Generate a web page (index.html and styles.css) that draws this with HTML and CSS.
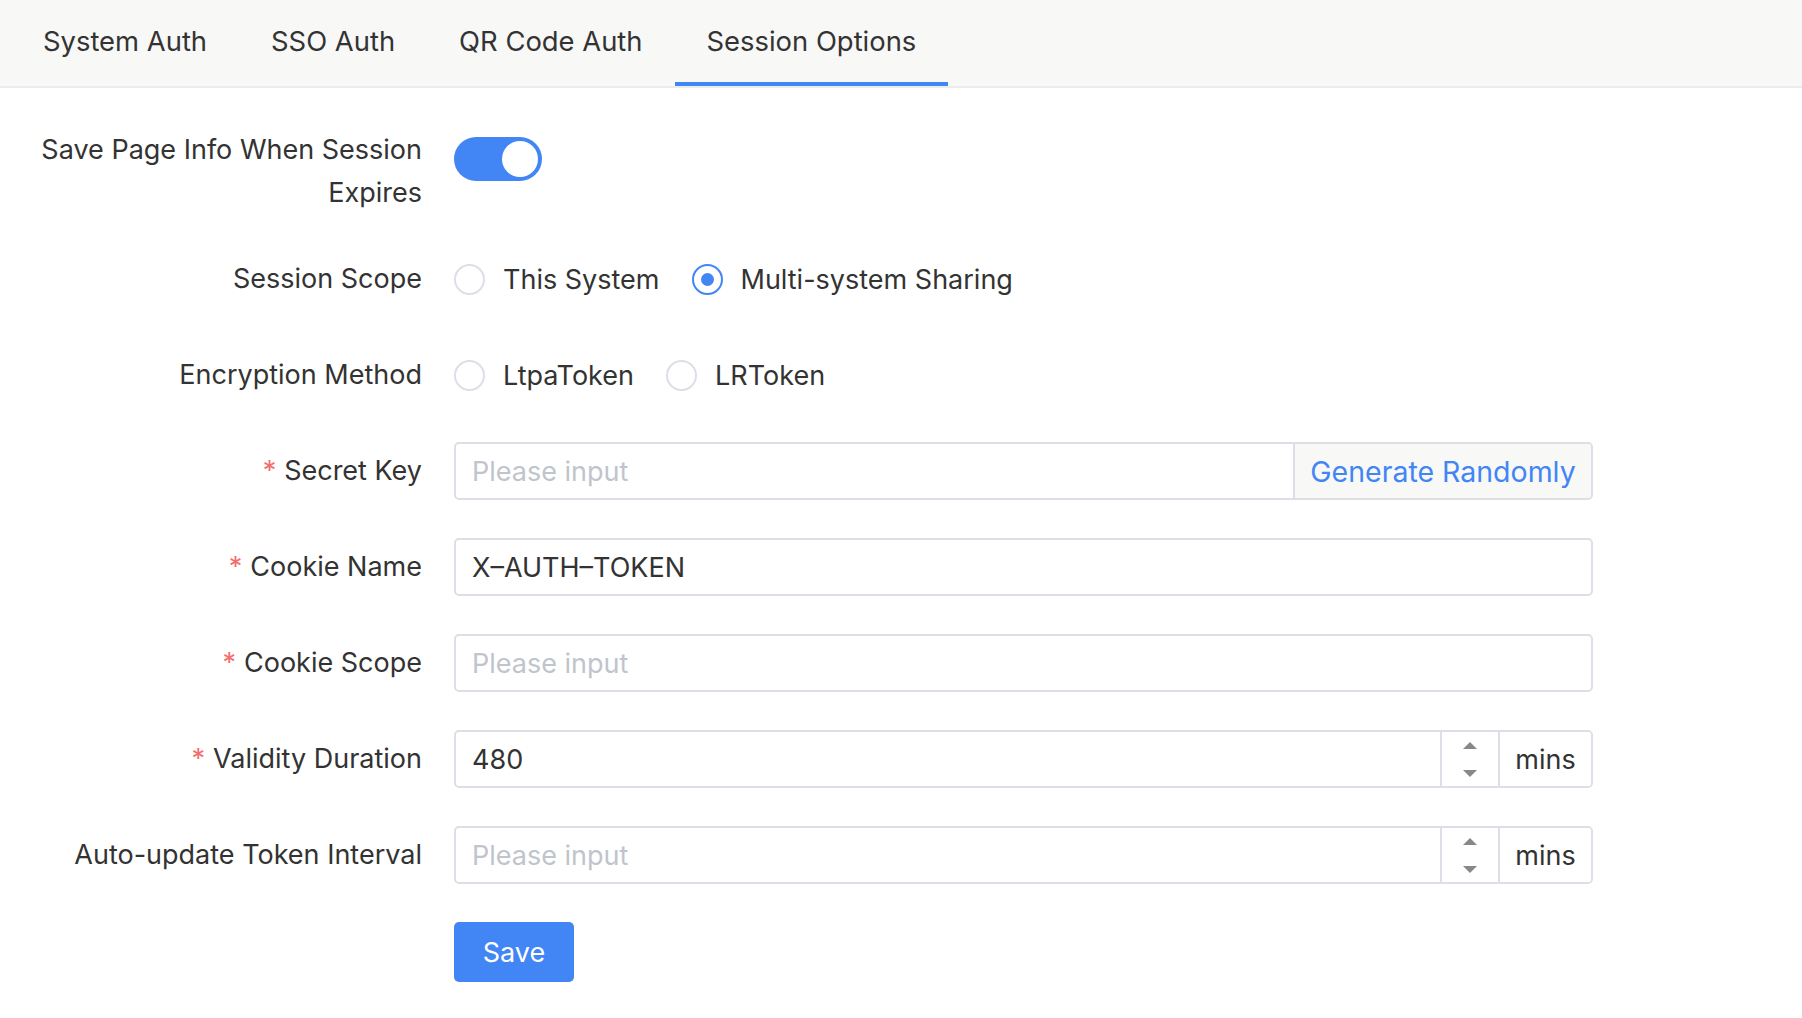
FILE: index.html
```html
<!DOCTYPE html>
<html lang="en">
<head>
<meta charset="utf-8">
<title>Session Options</title>
<link rel="stylesheet" href="styles.css">
</head>
<body>
<div class="tabs">
  <div class="tab">System Auth</div>
  <div class="tab">SSO Auth</div>
  <div class="tab">QR Code Auth</div>
  <div class="tab active">Session Options</div>
</div>
<form class="form">
  <div class="row row-multi">
    <label class="label multi">Save Page Info When Session<br>Expires</label>
    <div class="control control-top">
      <span class="switch"><span class="knob"></span></span>
    </div>
  </div>
  <div class="row">
    <label class="label">Session Scope</label>
    <div class="control">
      <span class="radio"><span class="circle"></span><span class="radio-text">This System</span></span>
      <span class="radio checked"><span class="circle"></span><span class="radio-text">Multi-system Sharing</span></span>
    </div>
  </div>
  <div class="row">
    <label class="label">Encryption Method</label>
    <div class="control">
      <span class="radio"><span class="circle"></span><span class="radio-text">LtpaToken</span></span>
      <span class="radio"><span class="circle"></span><span class="radio-text">LRToken</span></span>
    </div>
  </div>
  <div class="row">
    <label class="label"><span class="req">*</span>Secret Key</label>
    <div class="control">
      <div class="group">
        <input class="input" type="text" placeholder="Please input">
        <span class="addon addon-gen">Generate Randomly</span>
      </div>
    </div>
  </div>
  <div class="row">
    <label class="label"><span class="req">*</span>Cookie Name</label>
    <div class="control">
      <div class="group">
        <input class="input" type="text" value="X–AUTH–TOKEN">
      </div>
    </div>
  </div>
  <div class="row">
    <label class="label"><span class="req">*</span>Cookie Scope</label>
    <div class="control">
      <div class="group">
        <input class="input" type="text" placeholder="Please input">
      </div>
    </div>
  </div>
  <div class="row">
    <label class="label"><span class="req">*</span>Validity Duration</label>
    <div class="control">
      <div class="group">
        <input class="input" type="text" value="480">
        <span class="spinner"><span class="tri up"></span><span class="tri down"></span></span>
        <span class="addon addon-unit">mins</span>
      </div>
    </div>
  </div>
  <div class="row">
    <label class="label">Auto-update Token Interval</label>
    <div class="control">
      <div class="group">
        <input class="input" type="text" placeholder="Please input">
        <span class="spinner"><span class="tri up"></span><span class="tri down"></span></span>
        <span class="addon addon-unit">mins</span>
      </div>
    </div>
  </div>
  <div class="row row-actions">
    <button class="btn" type="button">Save</button>
  </div>
</form>
</body>
</html>
```
FILE: styles.css
```css
html, body {
  margin: 0;
  padding: 0;
  background: #ffffff;
}
body {
  font-family: Inter, "Liberation Sans", Arial, sans-serif;
  color: #333333;
  font-size: 27px;
}
.tabs {
  display: flex;
  background: #f8f8f7;
  border-bottom: 2px solid #ececec;
  padding-left: 11px;
}
.tab {
  box-sizing: border-box;
  height: 86px;
  padding: 0 32px;
  line-height: 82px;
  font-size: 27.4px;
  color: #333333;
  border-bottom: 4px solid transparent;
  white-space: nowrap;
}
.tab.active {
  border-bottom-color: #4285f4;
}
.form {
  padding-top: 40px;
  margin: 0;
}
.row {
  display: flex;
  align-items: flex-start;
  column-gap: 32px;
  margin-bottom: 38px;
}
.row-multi {
  margin-bottom: 36px;
}
.label {
  flex: none;
  width: 390px;
  margin-left: 32px;
  text-align: right;
  line-height: 58px;
  font-size: 27px;
  color: #333333;
  white-space: nowrap;
}
.label.multi {
  line-height: 43px;
}
.req {
  color: #f56c6c;
  margin-right: 8px;
}
.control {
  flex: none;
  width: 1139px;
  min-height: 58px;
  display: flex;
  align-items: center;
}
.control-top {
  align-items: flex-start;
}
.switch {
  margin-top: 9px;
  box-sizing: border-box;
  width: 88px;
  height: 44px;
  border-radius: 22px;
  background: #4285f4;
  padding: 4px;
  display: flex;
  justify-content: flex-end;
}
.knob {
  width: 36px;
  height: 36px;
  border-radius: 50%;
  background: #ffffff;
}
.radio {
  display: inline-flex;
  align-items: center;
  gap: 18px;
  margin-right: 32px;
  font-size: 27px;
  white-space: nowrap;
}
.circle {
  box-sizing: border-box;
  width: 31px;
  height: 31px;
  border: 2px solid #dcdfe6;
  border-radius: 50%;
  display: flex;
  align-items: center;
  justify-content: center;
}
.checked .circle {
  border-color: #4285f4;
}
.checked .circle::after {
  content: "";
  width: 13px;
  height: 13px;
  border-radius: 50%;
  background: #4285f4;
}
.group {
  box-sizing: border-box;
  display: flex;
  width: 100%;
  height: 58px;
  border: 2px solid #dcdfe6;
  border-radius: 5px;
  overflow: hidden;
}
.input {
  flex: 1;
  min-width: 0;
  border: 0;
  outline: none;
  padding: 0 16px;
  margin: 0;
  background: transparent;
  font-family: inherit;
  font-size: 27px;
  color: #333333;
}
.input::placeholder {
  color: #c0c4cc;
}
.addon {
  box-sizing: border-box;
  flex: none;
  display: flex;
  align-items: center;
  justify-content: center;
  border-left: 2px solid #dcdfe6;
  font-size: 27px;
  white-space: nowrap;
}
.addon-gen {
  width: 298px;
  background: #f8f8f7;
  color: #4285f4;
  font-size: 28.5px;
}
.addon-unit {
  width: 93px;
  background: #ffffff;
  color: #333333;
}
.spinner {
  box-sizing: border-box;
  flex: none;
  width: 58px;
  border-left: 2px solid #dcdfe6;
  display: flex;
  flex-direction: column;
  align-items: center;
  justify-content: center;
  gap: 21px;
}
.tri {
  width: 0;
  height: 0;
  border-left: 7px solid transparent;
  border-right: 7px solid transparent;
}
.tri.up {
  border-bottom: 7px solid #888888;
}
.tri.down {
  border-top: 7px solid #888888;
}
.row-actions {
  padding-left: 454px;
}
.btn {
  width: 120px;
  height: 60px;
  border: 0;
  border-radius: 5px;
  background: #4285f4;
  color: #ffffff;
  font-family: inherit;
  font-size: 27px;
  padding: 0;
  cursor: pointer;
}
```
